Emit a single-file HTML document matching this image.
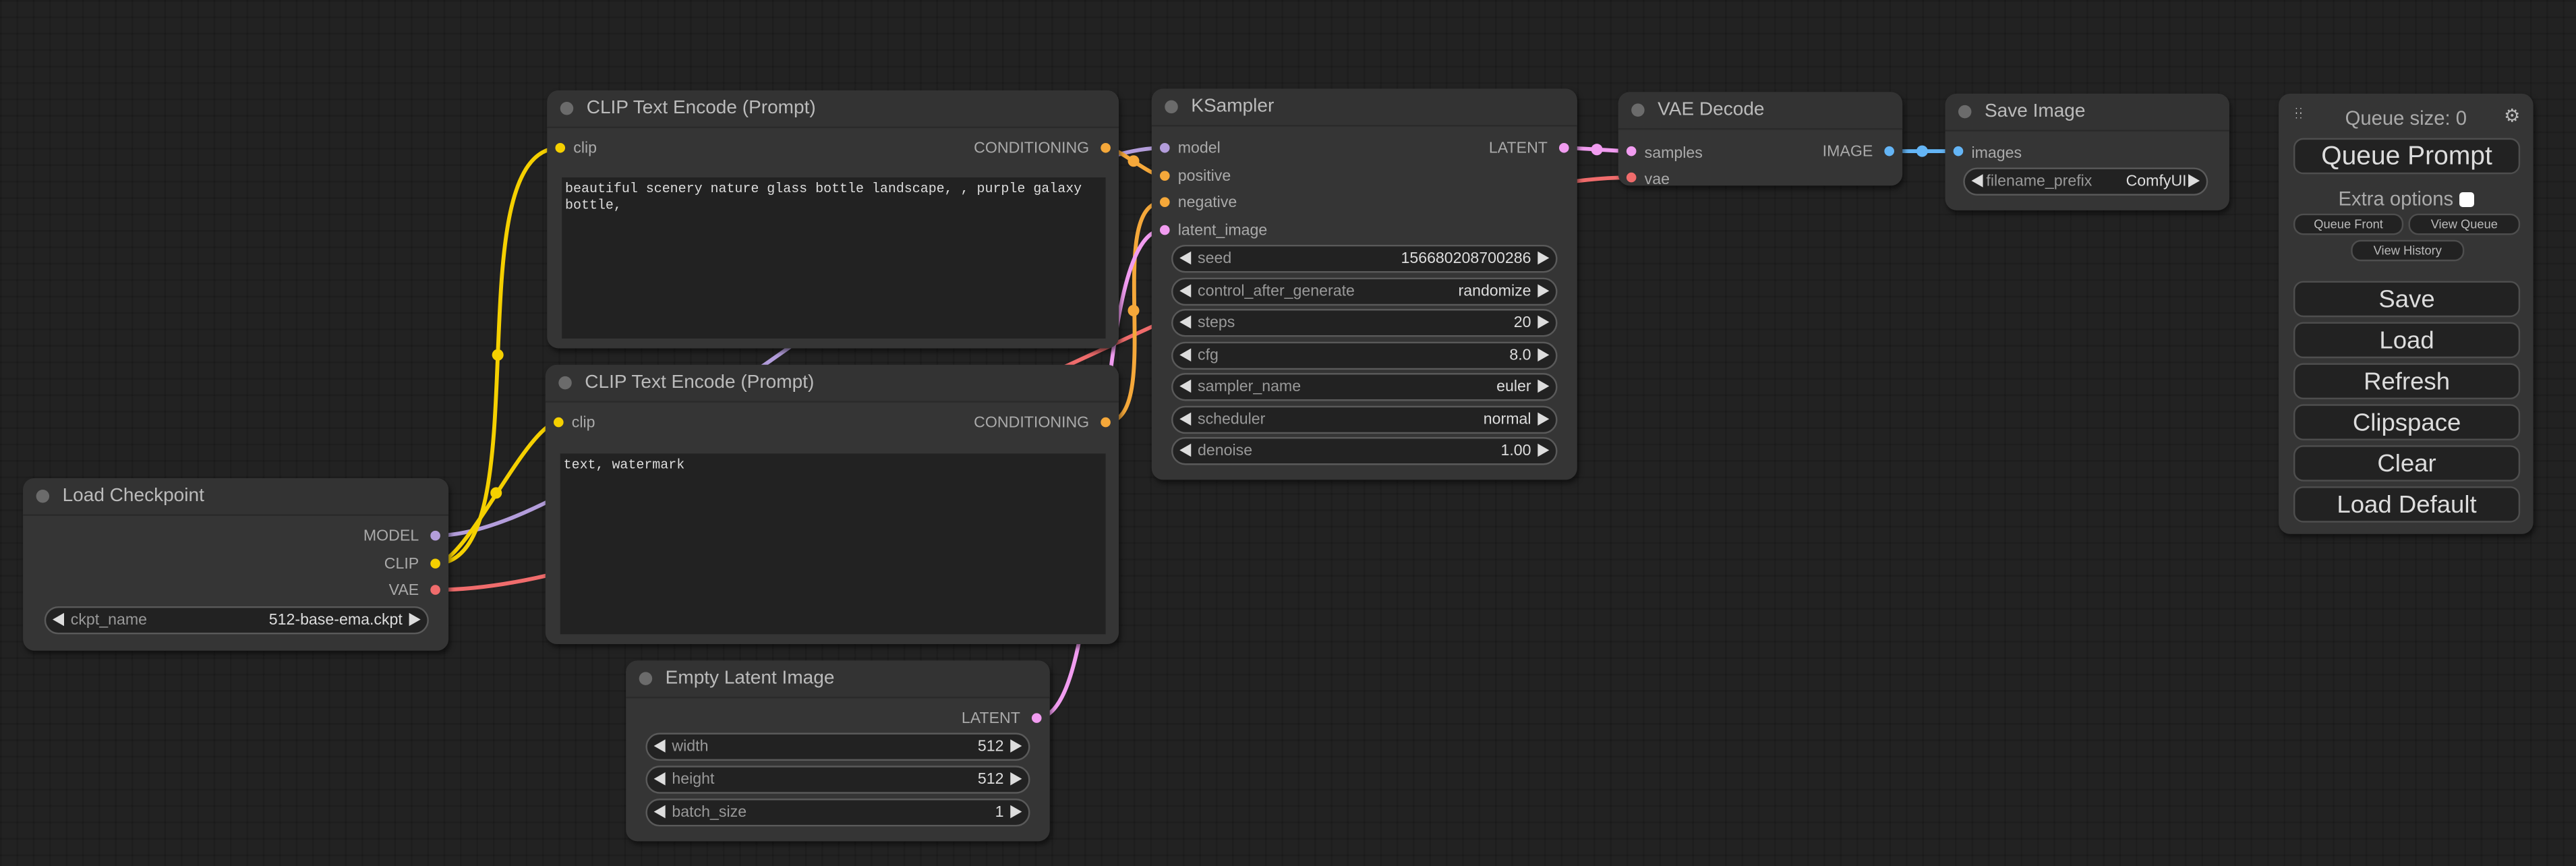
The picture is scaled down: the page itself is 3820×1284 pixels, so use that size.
<!DOCTYPE html>
<html><head><meta charset="utf-8"><style>
html,body{margin:0;padding:0;width:3820px;height:1284px;overflow:hidden;background:#222}
#w{position:absolute;left:0;top:0;width:1568px;height:527px;transform:scale(2.43622);transform-origin:0 0;
background-color:#222;
background-image:linear-gradient(rgba(0,0,0,.13) 1px,transparent 1px),linear-gradient(90deg,rgba(0,0,0,.13) 1px,transparent 1px);
background-size:10px 10px;font-family:"Liberation Sans",Arial,sans-serif}
svg.links{position:absolute;left:0;top:0}
.n{position:absolute;background:#353535;border-radius:7px;box-shadow:1px 2px 3px rgba(0,0,0,.5)}
.t{height:22px;border-bottom:1px solid #2a2a2a;background:#333;border-radius:7px 7px 0 0;color:#bbb;font-size:11.5px;line-height:23px;padding-left:24px;position:relative}
.t:before{content:"";position:absolute;left:8px;top:7px;width:8px;height:8px;border-radius:50%;background:#6b6b6b}
.s{position:absolute;font-size:9.5px;color:#aaa;line-height:12px;margin-top:1px}
.d{position:absolute;width:6px;height:6px;border-radius:50%}
.wd{position:absolute;height:15px;border:1px solid #5a5a5a;border-radius:9px;background:#222;font-size:9.5px;line-height:16px;color:#999}
.wd .l{position:absolute;left:15px}
.wd .v{position:absolute;right:15px;color:#ddd}
.wd:before{content:"";position:absolute;left:4px;top:3px;border-right:7px solid #ddd;border-top:4.5px solid transparent;border-bottom:4.5px solid transparent}
.wd:after{content:"";position:absolute;right:4px;top:3px;border-left:7px solid #ddd;border-top:4.5px solid transparent;border-bottom:4.5px solid transparent}
.ta{position:absolute;background:#222;color:#ddd;font-family:"Liberation Mono",monospace;font-size:8.2px;line-height:10px;padding:3px 2px;box-sizing:border-box}
.b{position:absolute;left:9px;width:136px;height:20px;border:1px solid #4e4e4e;border-radius:6px;background:#222;color:#ddd;font-size:15px;line-height:21px;text-align:center;box-sizing:content-box}
.sb{position:absolute;height:11px;border:1px solid #4e4e4e;border-radius:6px;background:#222;color:#bbb;font-size:7.5px;line-height:12px;text-align:center}
</style></head><body><div id="w">
<svg class="links" width="1568" height="527" fill="none" stroke-width="2.4">
<path d="M265,326 C370,326 600,90 708,90" stroke="#b39ddb"/>
<path d="M265,359 C450,359 800,108 993,108" stroke="#f06c6c"/>
<path d="M265,343 C331,343 275,90 341,90" stroke="#f5d000"/>
<path d="M265,343 C284,343 321,257 340,257" stroke="#f5d000"/>
<path d="M673,90 C682,90 699,107 708,107" stroke="#f5a83a"/>
<path d="M673,257 C710,257 671,123 708,123" stroke="#f5a83a"/>
<path d="M631,437 C680,437 659,140 708,140" stroke="#f19cf0"/>
<path d="M952,90 C962,90 983,92 993,92" stroke="#f19cf0"/>
<path d="M1150,92 C1160,92 1181,92 1191,92" stroke="#64b5f6"/>
<circle cx="303" cy="216" r="3.5" fill="#f5d000"/>
<circle cx="302" cy="300" r="3.5" fill="#f5d000"/>
<circle cx="690" cy="98" r="3.5" fill="#f5a83a"/>
<circle cx="690" cy="189" r="3.5" fill="#f5a83a"/>
<circle cx="972" cy="91" r="3.5" fill="#f19cf0"/>
<circle cx="1170" cy="92" r="3.5" fill="#64b5f6"/>
</svg>

<div class="n" style="left:14px;top:291px;width:259px;height:105px">
<div class="t">Load Checkpoint</div>
<div class="s" style="right:18px;top:29px">MODEL</div><div class="d" style="left:248px;top:32px;background:#b39ddb"></div>
<div class="s" style="right:18px;top:46px">CLIP</div><div class="d" style="left:248px;top:49px;background:#f5d000"></div>
<div class="s" style="right:18px;top:62px">VAE</div><div class="d" style="left:248px;top:65px;background:#f06c6c"></div>
<div class="wd" style="left:13px;top:78px;width:232px"><span class="l">ckpt_name</span><span class="v">512-base-ema.ckpt</span></div>
</div>

<div class="n" style="left:333px;top:55px;width:348px;height:157px">
<div class="t">CLIP Text Encode (Prompt)</div>
<div class="d" style="left:5px;top:32px;background:#f5d000"></div><div class="s" style="left:16px;top:29px">clip</div>
<div class="s" style="right:18px;top:29px">CONDITIONING</div><div class="d" style="left:337px;top:32px;background:#f5a83a"></div>
<div class="ta" style="left:9px;top:53px;width:331px;height:98px">beautiful scenery nature glass bottle landscape, , purple galaxy bottle,</div>
</div>

<div class="n" style="left:332px;top:222px;width:349px;height:170px">
<div class="t">CLIP Text Encode (Prompt)</div>
<div class="d" style="left:5px;top:32px;background:#f5d000"></div><div class="s" style="left:16px;top:29px">clip</div>
<div class="s" style="right:18px;top:29px">CONDITIONING</div><div class="d" style="left:338px;top:32px;background:#f5a83a"></div>
<div class="ta" style="left:9px;top:54px;width:332px;height:110px">text, watermark</div>
</div>

<div class="n" style="left:381px;top:402px;width:258px;height:110px">
<div class="t">Empty Latent Image</div>
<div class="s" style="right:18px;top:29px">LATENT</div><div class="d" style="left:247px;top:32px;background:#f19cf0"></div>
<div class="wd" style="left:12px;top:44px;width:232px"><span class="l">width</span><span class="v">512</span></div>
<div class="wd" style="left:12px;top:64px;width:232px"><span class="l">height</span><span class="v">512</span></div>
<div class="wd" style="left:12px;top:84px;width:232px"><span class="l">batch_size</span><span class="v">1</span></div>
</div>

<div class="n" style="left:701px;top:54px;width:259px;height:238px">
<div class="t">KSampler</div>
<div class="d" style="left:5px;top:33px;background:#b39ddb"></div><div class="s" style="left:16px;top:30px">model</div>
<div class="d" style="left:5px;top:50px;background:#f5a83a"></div><div class="s" style="left:16px;top:47px">positive</div>
<div class="d" style="left:5px;top:66px;background:#f5a83a"></div><div class="s" style="left:16px;top:63px">negative</div>
<div class="d" style="left:5px;top:83px;background:#f19cf0"></div><div class="s" style="left:16px;top:80px">latent_image</div>
<div class="s" style="right:18px;top:30px">LATENT</div><div class="d" style="left:248px;top:33px;background:#f19cf0"></div>
<div class="wd" style="left:12px;top:95px;width:233px"><span class="l">seed</span><span class="v">156680208700286</span></div>
<div class="wd" style="left:12px;top:115px;width:233px"><span class="l">control_after_generate</span><span class="v">randomize</span></div>
<div class="wd" style="left:12px;top:134px;width:233px"><span class="l">steps</span><span class="v">20</span></div>
<div class="wd" style="left:12px;top:154px;width:233px"><span class="l">cfg</span><span class="v">8.0</span></div>
<div class="wd" style="left:12px;top:173px;width:233px"><span class="l">sampler_name</span><span class="v">euler</span></div>
<div class="wd" style="left:12px;top:193px;width:233px"><span class="l">scheduler</span><span class="v">normal</span></div>
<div class="wd" style="left:12px;top:212px;width:233px"><span class="l">denoise</span><span class="v">1.00</span></div>
</div>

<div class="n" style="left:985px;top:56px;width:173px;height:57px">
<div class="t">VAE Decode</div>
<div class="d" style="left:5px;top:33px;background:#f19cf0"></div><div class="s" style="left:16px;top:31px">samples</div>
<div class="d" style="left:5px;top:49px;background:#f06c6c"></div><div class="s" style="left:16px;top:47px">vae</div>
<div class="s" style="right:18px;top:30px">IMAGE</div><div class="d" style="left:162px;top:33px;background:#64b5f6"></div>
</div>

<div class="n" style="left:1184px;top:57px;width:173px;height:71px">
<div class="t">Save Image</div>
<div class="d" style="left:5px;top:32px;background:#64b5f6"></div><div class="s" style="left:16px;top:30px">images</div>
<div class="wd" style="left:11px;top:45px;width:147px"><span class="l" style="left:13px">filename_prefix</span><span class="v" style="right:12px">ComfyUI</span></div>
</div>

<div class="n" style="left:1387px;top:57px;width:155px;height:268px;border-radius:7px">
<div style="position:absolute;left:10px;top:10px;width:6px;height:9px;color:#ccc;font-size:6px;line-height:3px;letter-spacing:1px">::<br>::</div>
<div style="position:absolute;left:0;right:0;top:8px;text-align:center;color:#aaa;font-size:12px">Queue size: 0</div>
<div style="position:absolute;right:8px;top:7px;color:#bbb;font-size:11px">⚙</div>
<div class="b" style="top:27px;font-size:16px">Queue Prompt</div>
<div style="position:absolute;left:0;right:0;top:57px;text-align:center;color:#aaa;font-size:12px">Extra options <span style="display:inline-block;width:9px;height:9px;background:#fff;border-radius:2px;vertical-align:-1px"></span></div>
<div class="sb" style="left:9px;top:73px;width:65px">Queue Front</div>
<div class="sb" style="left:79px;top:73px;width:66px">View Queue</div>
<div class="sb" style="left:44px;top:89px;width:67px">View History</div>
<div class="b" style="top:114px">Save</div>
<div class="b" style="top:139px">Load</div>
<div class="b" style="top:164px">Refresh</div>
<div class="b" style="top:189px">Clipspace</div>
<div class="b" style="top:214px">Clear</div>
<div class="b" style="top:239px">Load Default</div>
</div>
</div></body></html>
